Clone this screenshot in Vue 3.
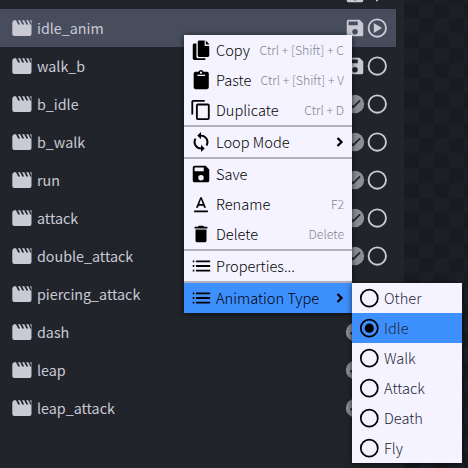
<script setup>
const rows = [
  { name: 'idle_anim', save: 'floppy', play: true },
  { name: 'walk_b', save: 'floppy' },
  { name: 'b_idle', save: 'check' },
  { name: 'b_walk', save: 'check' },
  { name: 'run', save: 'check' },
  { name: 'attack', save: 'check' },
  { name: 'double_attack', save: 'check' },
  { name: 'piercing_attack', save: 'check' },
  { name: 'dash', save: 'check' },
  { name: 'leap', save: 'check' },
  { name: 'leap_attack', save: 'check' },
]
const icons = {
  copy: 'M10 1.500h6v6h5V18a1.500 1.500 0 0 1-1.500 1.500H10A1.500 1.500 0 0 1 8.500 18V3A1.500 1.500 0 0 1 10 1.500zM17.300 1.500l4 4.500h-4zM4.500 5H7v14.500A1.500 1.500 0 0 0 8.500 21H17v.5a1.300 1.300 0 0 1-1.300 1.300H4.500A1.500 1.500 0 0 1 3 21.300V6.500A1.500 1.500 0 0 1 4.500 5z',
  paste: 'M19 3h-4.200a3 3 0 0 0-5.600 0H6a2 2 0 0 0-2 2v15a2 2 0 0 0 2 2h12.500a2 2 0 0 0 2-2V5a2 2 0 0 0-1.500-2zm-7-.2a1.200 1.200 0 1 1 0 2.400 1.200 1.200 0 0 1 0-2.400zM8 6.300h8.500v1.400H8z',
  duplicate: 'M16 1H3.500a2 2 0 0 0-2 2v14h2V3H16zM19.500 5H8.500a2 2 0 0 0-2 2v14a2 2 0 0 0 2 2h11a2 2 0 0 0 2-2V7a2 2 0 0 0-2-2zm0 16h-11V7h11z',
  loop: 'M12 4V1L8 5l4 4V6a6 6 0 0 1 5.200 9l1.500 1.500A8 8 0 0 0 12 4zm0 14a6 6 0 0 1-5.200-9L5.300 7.500A8 8 0 0 0 12 20v3l4-4-4-4z',
  save: 'M17 3H5a2 2 0 0 0-2 2v14a2 2 0 0 0 2 2h14a2 2 0 0 0 2-2V7zM12 19a3 3 0 1 1 0-6 3 3 0 0 1 0 6zM15 9H5V5h10z',
  rename: 'M4.500 19h15v2h-15zM9.500 13.800h5l.9 2.200h2.100L12.750 4.500h-1.500L6.500 16h2.100zM12 6.700l1.870 5.300h-3.740z',
  trash: 'M6 19a2 2 0 0 0 2 2h8a2 2 0 0 0 2-2V7H6zM19 4h-3.500l-1-1h-5l-1 1H5v2h14z',
  list: 'M3 6h1.700v2H3zm0 5h1.700v2H3zm0 5h1.700v2H3zM6.500 6H22v2H6.500zm0 5H22v2H6.500zm0 5H22v2H6.500z',
}
const groups = [
  [
    { label: 'Copy', key: 'Ctrl + [Shift] + C', icon: 'copy' },
    { label: 'Paste', key: 'Ctrl + [Shift] + V', icon: 'paste' },
    { label: 'Duplicate', key: 'Ctrl + D', icon: 'duplicate' },
  ],
  [{ label: 'Loop Mode', icon: 'loop', sub: true }],
  [
    { label: 'Save', icon: 'save' },
    { label: 'Rename', key: 'F2', icon: 'rename' },
    { label: 'Delete', key: 'Delete', icon: 'trash' },
  ],
  [{ label: 'Properties...', icon: 'list' }],
  [{ label: 'Animation Type', icon: 'list', sub: true, active: true }],
]
const types = ['Other', 'Idle', 'Walk', 'Attack', 'Death', 'Fly']
</script>

<template>
  <div class="app">
    <section class="panel">
      <div class="sliver">
        <svg class="status" viewBox="0 0 24 24"><path :d="icons.save" fill-rule="evenodd" /></svg>
        <svg class="status" viewBox="0 0 24 24"><path d="M11 15h2v5h-2z" /></svg>
      </div>
      <div v-for="(r, i) in rows" :key="r.name" class="row" :class="{ selected: i === 0 }">
        <svg class="clip" viewBox="0 0 20 16">
          <path d="M2 .3h2l2.200 4.200h1.900L6 .3h2.100l2.200 4.200h1.900L10.100.3h2.100l2.200 4.200h1.900L14.200.3h2.100l2 4.200h1.200L18 .3h1.500V14a2 2 0 0 1-2 2H2.300a2 2 0 0 1-2-2V2.500Q.5 1 2 .3z" />
        </svg>
        <span class="name">{{ r.name }}</span>
        <svg class="status" viewBox="0 0 24 24">
          <path v-if="r.save === 'floppy'" :d="icons.save" fill-rule="evenodd" />
          <g v-else>
            <circle class="disc" cx="12" cy="12" r="10" />
            <path class="tick" d="M7 12.500l3 3 7.500-7.500" />
          </g>
        </svg>
        <svg class="status" viewBox="0 0 24 24">
          <circle class="ring" cx="12.300" cy="12" r="9.500" />
          <path v-if="r.play" d="M8.500 6.500v11l9-5.500z" />
        </svg>
      </div>
    </section>

    <ul class="menu main">
      <template v-for="(g, gi) in groups" :key="gi">
        <li v-if="gi" class="sep"></li>
        <li v-for="m in g" :key="m.label" class="item" :class="{ active: m.active }">
          <svg class="icon" viewBox="0 0 24 24"><path :d="icons[m.icon]" fill-rule="evenodd" /></svg>
          <span class="label">{{ m.label }}</span>
          <kbd v-if="m.key">{{ m.key }}</kbd>
          <svg v-if="m.sub" class="chev" viewBox="0 0 8 10"><path d="M1.500 1l4 4-4 4" /></svg>
        </li>
      </template>
    </ul>

    <ul class="menu types">
      <li v-for="t in types" :key="t" class="item" :class="{ active: t === 'Idle' }">
        <svg class="icon" viewBox="0 0 22 22">
          <circle class="o" cx="11.300" cy="11.200" r="8.500" />
          <circle v-if="t === 'Idle'" cx="11.300" cy="11.200" r="4.600" />
        </svg>
        <span class="label">{{ t }}</span>
      </li>
    </ul>
  </div>
</template>

<style>
body { margin: 0; overflow: hidden; }
</style>

<style scoped>
.app {
  position: relative;
  box-sizing: border-box;
  width: 468px;
  height: 468px;
  overflow: hidden;
  background: repeating-conic-gradient(#1c1f26 0 25%, #181b1f 0 50%) 404px 3px / 30px 30px;
  font-family: "Noto Sans CJK SC", sans-serif;
  font-size: 14.3px;
}
.panel { width: 404px; height: 468px; background: #21252b; overflow: hidden; }
.sliver { display: flex; justify-content: flex-end; align-items: flex-end; height: 9px; width: 388px; overflow: hidden; }
.sliver .status { margin-bottom: 4px; }
.row {
  display: flex;
  align-items: center;
  box-sizing: border-box;
  width: 396px;
  height: 38px;
  padding: 0 8px 0 12px;
}
.row.selected { background: #474d5d; }
.clip { width: 20px; height: 16px; fill: #cacad4; margin-right: 5px; }
.name { flex: 1; color: #cacad4; line-height: 38px; }
.status { width: 22px; height: 22px; fill: #cacad4; flex: none; }
.ring { fill: none; stroke: #cacad4; stroke-width: 2; }
.disc { fill: #8c8f95; }
.tick { fill: none; stroke: #21252b; stroke-width: 1.800; }
.menu {
  position: absolute;
  margin: 0;
  padding: 0;
  list-style: none;
  background: #f4f3ff;
  box-shadow: 0 1px 6px rgba(0, 0, 0, 0.7);
}
.main { left: 184px; top: 35px; width: 168px; }
.types { left: 352px; top: 283px; width: 110px; }
.sep { height: 2px; background: #b3b1bd; }
.item {
  display: flex;
  align-items: center;
  box-sizing: border-box;
  height: 30px;
  padding: 0 8px 0 6px;
  font-size: 14.6px;
  font-weight: 300;
  color: #000;
  white-space: nowrap;
}
.item.active { background: #3e90ff; }
.icon { width: 22px; height: 22px; margin-right: 4px; flex: none; }
.label { flex: 1; line-height: 30px; }
kbd { font: inherit; font-size: 12.3px; color: #85848f; line-height: 30px; }
.chev { width: 8px; height: 10px; }
.chev path { fill: none; stroke: #000; stroke-width: 2.300; }
.types .label { color: #222433; }
.o { fill: none; stroke: #000; stroke-width: 1.700; }
</style>
